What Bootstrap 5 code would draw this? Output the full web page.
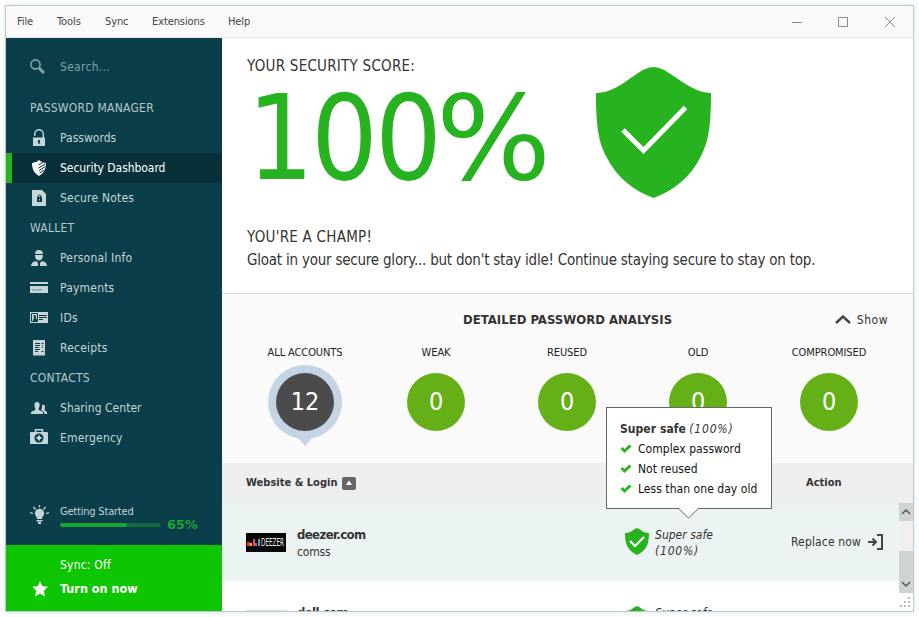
<!DOCTYPE html>
<html lang="en">
<head>
<meta charset="utf-8">
<title>Security Dashboard</title>
<link href="https://cdn.jsdelivr.net/npm/bootstrap@5.3.0/dist/css/bootstrap.min.css" rel="stylesheet">
<style>
html,body{height:617px;overflow:hidden}
body{background:#fff;font:12px/16px Tahoma,"DejaVu Sans Condensed","DejaVu Sans",sans-serif;font-stretch:condensed;color:#333;letter-spacing:.02px;white-space:nowrap}
svg{display:block;flex:none}
.app-window{margin:5px;width:909px;height:607px;border:1px solid #b7cad1;box-shadow:0 0 6px #dfe5e5;background:#fff}
.menu-bar{height:32px;flex:none;background:#f9f9f9;font-size:11px;padding:1px 17px 0 11px;letter-spacing:-.1px;color:#444;border-bottom:1px solid #e7e7e7}
.side-pane{width:216px;background:#093e4a;color:#c5d5d8;flex:none}
.search-box{height:55px;padding:2px 0 0 24px;gap:15px;color:#84a1a7;letter-spacing:.3px}
.side-item,.side-head{height:30px;padding-left:24px;margin:0}
.side-item{gap:12px}
.side-item svg{width:18px;height:18px}
.side-head{color:#b9c9cb;letter-spacing:.25px}
.side-item.current{background:#07303b;color:#fff;border-left:6px solid #26b31f;padding-left:18px;letter-spacing:-.05px}
.wide{letter-spacing:.2px}
.starter{padding-left:24px;margin-top:auto;height:47px;gap:11px;font-size:11px;letter-spacing:-.2px}
.starter svg{margin-top:7px}
.track{width:101px;height:4px;border-radius:2px;background:#116b3e}
.track .progress-bar{background:#1aa52c;border-radius:2px}
.pct{color:#1ba431;font:bold 13px/14px "DejaVu Sans",sans-serif;letter-spacing:-.2px}
.sync-box{height:66px;background:#0dc500;color:#fff;padding:8px 0 0 24px}
.sync-box .line{height:24px;gap:12px}
.turn{font-size:12.5px}
.score-pane{height:256px;border-bottom:1px solid #dadada;padding:18px 0 0 25px;font-size:15px;line-height:20px;letter-spacing:-.22px}
.caps{letter-spacing:.25px}
.score-num{font-size:117px;line-height:126px;color:#27b220;letter-spacing:-3px;margin-top:0}
.score-num span{display:inline-block;transform:scaleX(1.15);transform-origin:0 50%;margin-left:-3px}
.analysis{height:169px;background:#fafafa}
.analysis-top{height:51px;padding:0 25px 0 241px}
.detail-title{font-size:13px;letter-spacing:.02px}
.dial-col{width:131px;font-size:11px;color:#222;gap:12px;letter-spacing:-.1px}
.dial{width:58px;height:58px;border-radius:50%;background:#65b017;color:#fff;font-size:25px}
.dial.all{background:#4b4b4b;box-shadow:0 0 0 8px #c5d4e5;position:relative}
.dial.all::after{content:"";position:absolute;left:22px;top:65px;border:7px solid transparent;border-top:8px solid #c5d4e5;border-bottom:0}
.th-row{height:40px;background:#eee;padding-left:24px;font-weight:bold;font-size:11px}
.site-row{height:78px;padding-left:24px;background:#ecf3f3}
.site-row.next{background:#fff}
.site-logo{margin-top:29px;margin-right:10px}
.site-name{width:328px;padding-top:23px;letter-spacing:-.2px}
.site-name b{font-size:13px;display:block;line-height:18px;letter-spacing:-.6px}
.safe-text{width:136px;padding-top:24px;font-style:italic;margin-left:6px}
.pc{letter-spacing:.8px}
.scroller{background:#f0f0f0}
.tip-box{position:absolute;left:606px;top:407px;width:166px;height:102px;background:#fff;border:1px solid #666;padding:11px 13px;line-height:20px;color:#111;letter-spacing:.05px}
.tip-box .tip-title{color:#333}
.tip-box .arrow-tip{position:absolute;left:71px;top:100px}
</style>
</head>
<body>
<div class="app-window d-flex flex-column">
  <header class="menu-bar d-flex align-items-center">
    <span style="width:40px">File</span><span style="width:48px">Tools</span><span style="width:47px">Sync</span><span style="width:76px">Extensions</span><span>Help</span>
    <svg class="ms-auto" width="104" height="12" fill="none" stroke="#8a8a8a"><path d="M0 6.500h10M46.500 1.500h9v9h-9zM93 1l10 10M103 1L93 11"/></svg>
  </header>
  <div class="d-flex flex-grow-1 overflow-hidden">
    <aside class="side-pane d-flex flex-column">
      <div class="search-box d-flex align-items-center"><svg width="15" height="15" fill="none" stroke="#84a1a7"><circle cx="5.500" cy="5.500" r="4.600" stroke-width="1.600"/><path d="M9 9l5 5" stroke-width="3"/></svg><span>Search...</span></div>
      <div class="side-head d-flex align-items-center">PASSWORD MANAGER</div>
      <div class="side-item d-flex align-items-center"><svg fill="#c5d5d8"><path fill-rule="evenodd" d="M3 8.500h12V17H3zM8 11v2l.5 2h1l.5-2v-2z"/><path d="M4.750 7V5a4.200 4.200 0 0 1 8.500 0v4" fill="none" stroke="#c5d5d8" stroke-width="1.400"/></svg>Passwords</div>
      <div class="side-item current d-flex align-items-center"><svg fill="#fff"><path d="M9 1c2 2 4 2.500 7 3 0 6-2 10-7 13C4 14 2 10 2 4c3-.5 5-1 7-3z"/><path d="M8.500 6l5-3M8.500 9l7-4M9 11.500l6.500-4M9.500 14l5-3" stroke="#07303b"/></svg>Security Dashboard</div>
      <div class="side-item wide d-flex align-items-center"><svg fill="#c5d5d8"><path d="M2 1h10l4 4v12H2z"/><path d="M7 8h5v5H7z" fill="#093e4a"/><path d="M8 8V7q1.500-2 3 0v1" stroke="#093e4a" fill="none"/><path d="M9.500 10v1.500" stroke="#c5d5d8"/></svg>Secure Notes</div>
      <div class="side-head d-flex align-items-center">WALLET</div>
      <div class="side-item wide d-flex align-items-center"><svg fill="#c5d5d8"><path d="M5 5q0-4 4-4t4 4zM5 6h8q0 5-4 5.500Q5 11 5 6zM1 17q0-4 5-5l2 2v3zM17 17q0-4-5-5l-2 2v3z"/><path d="M4 5.500h10" stroke="#093e4a" stroke-width=".6"/></svg>Personal Info</div>
      <div class="side-item wide d-flex align-items-center"><svg fill="#c5d5d8"><path d="M0 3h18v2H0zM0 7h18v7H0z"/><path d="M2 11.500l2-1 1 1 2-1 1 1 2-1 2 .5" stroke="#5d8087" fill="none"/></svg>Payments</div>
      <div class="side-item wide d-flex align-items-center"><svg fill="#c5d5d8"><path d="M0 3h18v11H0z"/><path d="M1.500 4.500h6v8h-6zM9 6.500h8M9 8.500h8M9 10.500h4" stroke="#093e4a" fill="none"/><path d="M3 12v-1.500l1-.5V9q-1-3 .5-3T6 9v1l1 .5V12z" fill="#093e4a"/></svg>IDs</div>
      <div class="side-item wide d-flex align-items-center"><svg fill="#c5d5d8"><path d="M3 1h12v15l-1 1-1-1-1 1-1-1-1 1-1-1-1 1-1-1-1 1-1-1-1 1-1-1z"/><path d="M5 4.500h5M5 6.500h5M5 8.500h4M5 10.500h5M5 12.500h3M11.500 4.500h2M12 6.500h1M12 8.500h1M11.500 12.500h2" stroke="#093e4a"/></svg>Receipts</div>
      <div class="side-head d-flex align-items-center">CONTACTS</div>
      <div class="side-item d-flex align-items-center"><svg fill="#c5d5d8"><path d="M1 15v-2l4-2q1-1 0-2-2-6 2-6t2 6q-1 1 0 2l4 2v2zM12 6q3-1 3 2 0 2-.5 3l2.500 2v2h-2.500l-.5-2-3-2 1-2z"/></svg>Sharing Center</div>
      <div class="side-item wide d-flex align-items-center"><svg fill="#c5d5d8"><path d="M0 4q0-1 1-1h16q1 0 1 1v10q0 1-1 1H1q-1 0-1-1z"/><path d="M5.500 3V.8h7V3" fill="none" stroke="#c5d5d8" stroke-width="1.500"/><circle cx="9" cy="9" r="4.500" fill="#093e4a"/><path d="M9 6.500v5M6.500 9h5" stroke="#c5d5d8" stroke-width="2"/></svg>Emergency</div>
      <div class="starter d-flex">
        <svg width="19" height="20" fill="#c5d5d8"><path d="M6.500 15h6v1.500h-6zM8 17h3v2H8zM7 14q0-2-1.500-3.500a4.600 4.600 0 1 1 8 0Q12 12 12 14z"/><path d="M9.500 0v2.500M3.500 2l2 2.500M15.500 2l-2 2.500M0 7.500l3 1M19 7.500l-3 1" stroke="#c5d5d8" stroke-width="1.300"/></svg>
        <div style="padding-top:6px"><div>Getting Started</div><div class="d-flex align-items-center" style="gap:6px;height:10px"><div class="progress track"><div class="progress-bar" style="width:66%"></div></div><span class="pct">65%</span></div></div>
      </div>
      <div class="sync-box"><div class="line wide d-flex align-items-center" style="padding-left:30px">Sync: Off</div><div class="line d-flex align-items-center"><svg width="18" height="16" fill="#fff"><path d="M10 0l2.300 5.200 5.700.6-4.200 3.900 1.200 5.800-5-3-5 3 1.200-5.800L2.500 5.800l5.300-.6z"/></svg><b class="turn">Turn on now</b></div></div>
    </aside>
    <main class="flex-grow-1">
      <section class="score-pane d-flex">
        <div style="width:349px"><div class="caps">YOUR SECURITY SCORE:</div><div class="score-num">100<span>%</span></div><div class="caps" style="margin-top:25px">YOU'RE A CHAMP!</div><div style="margin-top:3px">Gloat in your secure glory... but don't stay idle! Continue staying secure to stay on top.</div></div>
        <svg width="115" height="131" style="margin-top:11px"><path d="M0 26C20 26 35 9 48 2.500Q57.500-2.500 67 2.500C80 9 97 26 115 26C115 62 112 75 105 89C95 110 77 124 57.500 131C38 124 20 110 10 89C3 75 0 62 0 26z" fill="#27b220"/><path d="M27 63l20.500 20.500L89.500 40.500" fill="none" stroke="#fff" stroke-width="5"/></svg>
      </section>
      <section class="analysis">
        <div class="analysis-top d-flex align-items-center"><b class="detail-title">DETAILED PASSWORD ANALYSIS</b><svg class="ms-auto" width="16" height="9" fill="none" stroke="#444" stroke-width="2.400"><path d="M1 8l7-6.500L15 8"/></svg><span style="margin-left:6px;letter-spacing:.5px">Show</span></div>
        <div class="d-flex" style="padding-left:17.5px">
          <div class="dial-col d-flex flex-column align-items-center">ALL ACCOUNTS<div class="dial all d-flex align-items-center justify-content-center">12</div></div>
          <div class="dial-col d-flex flex-column align-items-center">WEAK<div class="dial d-flex align-items-center justify-content-center">0</div></div>
          <div class="dial-col d-flex flex-column align-items-center">REUSED<div class="dial d-flex align-items-center justify-content-center">0</div></div>
          <div class="dial-col d-flex flex-column align-items-center">OLD<div class="dial d-flex align-items-center justify-content-center">0</div></div>
          <div class="dial-col d-flex flex-column align-items-center">COMPROMISED<div class="dial d-flex align-items-center justify-content-center">0</div></div>
        </div>
      </section>
      <div class="th-row d-flex align-items-center"><div class="d-flex align-items-center" style="width:560px;gap:4px">Website &amp; Login<svg width="14" height="13"><rect width="14" height="13" rx="2" fill="#666"/><path d="M4 8h6L7 3.500z" fill="#fff"/></svg></div>Action</div>
      <div class="d-flex">
        <div style="width:677px">
          <div class="site-row d-flex">
            <svg class="site-logo" width="41" height="20"><path fill="#060606" d="M0 1h40v19H0z"/><path d="M1 10h3v4H1z" fill="#e33"/><path d="M4 11h2v3H4z" fill="#e8b820"/><path d="M7 7h2v7H7z" fill="#d34a8c"/><path d="M9 11h2v3H9z" fill="#e43"/><path d="M12 7h2v7h-2z" fill="#36a8cc"/><text x="15" y="14" font-size="11" fill="#eee" textLength="23" lengthAdjust="spacingAndGlyphs" letter-spacing="0">DEEZER</text></svg>
            <div class="site-name"><b>deezer.com</b>comss</div>
            <svg width="24" height="27" style="margin-top:25px"><path d="M0 5Q5 5 9 1.500Q12-.8 15 1.500Q19 5 24 5Q24 15 21 19.500Q18 24 12 27Q6 24 3 19.500Q0 15 0 5z" fill="#27b220"/><path d="M5 13l5 5 9-9" fill="none" stroke="#fff" stroke-width="2.200"/></svg>
            <div class="safe-text">Super safe<br><span class="pc">(100%)</span></div>
            <div class="d-flex align-items-center"><span style="width:77px;letter-spacing:.15px">Replace now</span><svg width="16" height="16" fill="none" stroke="#444" stroke-width="2"><path d="M0 8h7M4.500 4.500L8 8l-3.500 3.500M9 1h5v14H9"/></svg></div>
          </div>
          <div class="site-row next d-flex">
            <svg class="site-logo" width="41" height="20"><path fill="#ddd" d="M0 0h41v2H0z"/></svg>
            <div class="site-name"><b>dell.com</b></div>
            <svg width="24" height="27" style="margin-top:25px"><path d="M0 5Q5 5 9 1.500Q12-.8 15 1.500Q19 5 24 5Q24 15 21 19.500Q18 24 12 27Q6 24 3 19.500Q0 15 0 5z" fill="#27b220"/></svg>
            <div class="safe-text">Super safe</div>
          </div>
        </div>
        <div>
          <svg class="scroller" width="14" height="90"><path d="M0 0h14v18H0zM0 48h14v42H0z" fill="#d0d3d3"/><path d="M3 11l4-4 4 4M3 79l4 4 4-4" fill="none" stroke="#555" stroke-width="1.500"/></svg>
          <svg width="14" height="18" fill="#bbb"><path d="M9 4h2v2H9zM5 8h2v2H5zM9 8h2v2H9zM1 12h2v2H1zM5 12h2v2H5zM9 12h2v2H9z"/></svg>
        </div>
      </div>
    </main>
  </div>
</div>
<div class="tip-box">
  <div class="tip-title"><b>Super safe</b> <i class="pc">(100%)</i></div>
  <div class="d-flex align-items-center" style="gap:6px"><svg width="12" height="10" fill="none" stroke="#27b220" stroke-width="2.800"><path d="M1.500 4l3 3L10.500 1.500"/></svg>Complex password</div>
  <div class="d-flex align-items-center" style="gap:6px"><svg width="12" height="10" fill="none" stroke="#27b220" stroke-width="2.800"><path d="M1.500 4l3 3L10.500 1.500"/></svg>Not reused</div>
  <div class="d-flex align-items-center" style="gap:6px"><svg width="12" height="10" fill="none" stroke="#27b220" stroke-width="2.800"><path d="M1.500 4l3 3L10.500 1.500"/></svg>Less than one day old</div>
  <svg class="arrow-tip" width="21" height="11"><path d="M0 0L10.500 10L21 0" fill="#fff" stroke="#666"/></svg>
</div>
<script src="https://cdn.jsdelivr.net/npm/bootstrap@5.3.0/dist/js/bootstrap.bundle.min.js"></script>
</body>
</html>
